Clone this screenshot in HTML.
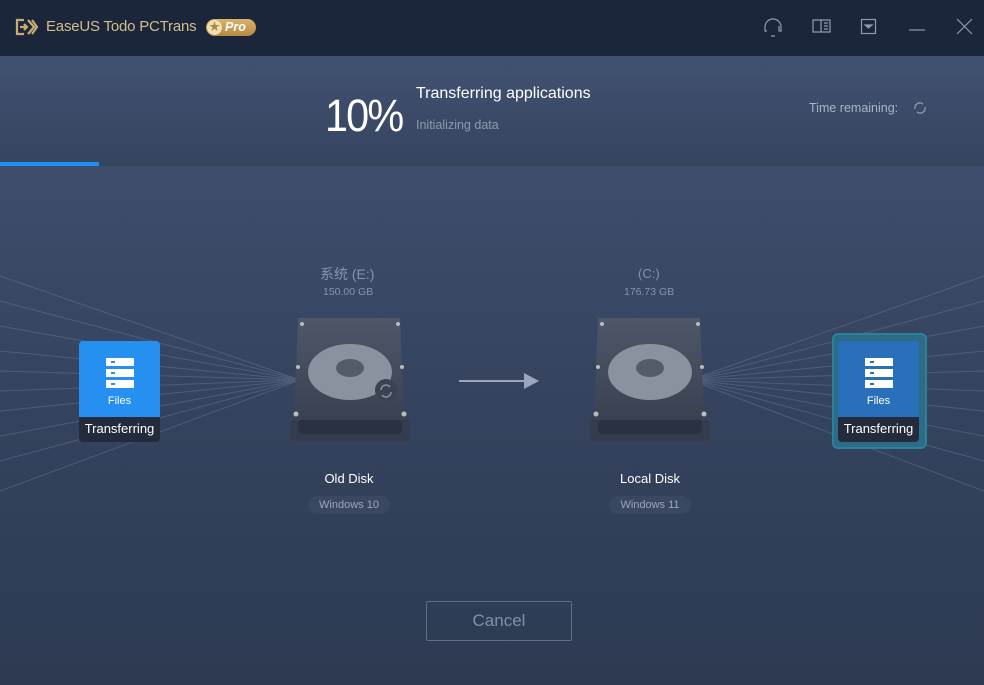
<!DOCTYPE html>
<html><head><meta charset="utf-8"><style>
*{margin:0;padding:0;box-sizing:border-box}
body{width:984px;height:685px;overflow:hidden;font-family:"Liberation Sans","Noto Sans CJK SC",sans-serif;background:#2f3c55;position:relative}
.abs{position:absolute}
#title{left:0;top:0;width:984px;height:56px;background:#1b263a}
#head{left:0;top:56px;width:984px;height:110px;background:linear-gradient(#415171,#36445f)}
#body{left:0;top:166px;width:984px;height:519px;background:linear-gradient(#3d4d6b,#34425d 50%,#2d3a52)}
.card{width:81px;height:101px;border-radius:4px;overflow:hidden}
.card .top{height:76px;display:flex;flex-direction:column;align-items:center;padding-top:17px;color:#fff;font-size:11px}
.card .bot{height:25px;background:#232b3c;color:#fff;font-size:13px;text-align:center;line-height:23px}
.lab{color:#fff;font-size:13px;text-align:center;width:120px}
.pill{font-size:11px;color:#9aa6bb;background:#3a4762;border-radius:9px;height:18px;line-height:18px;text-align:center}
</style></head><body>
<div id="title" class="abs"></div>
<div class="abs" style="left:14px;top:17px"><svg width="24" height="20" viewBox="0 0 24 20" fill="none" stroke="#c8ac74" stroke-width="2.2"><path d="M10 3H3v14h7M6 10h7M10 7l3 3-3 3M14 3l6 7-6 7M18 3l5 7-5 7"/></svg></div>
<div class="abs" style="left:46px;top:18px;color:#d2bd8e;font-size:15px;letter-spacing:-0.2px">EaseUS Todo PCTrans</div>
<div class="abs" style="left:206px;top:19px;width:50px;height:17px;border-radius:9px;background:linear-gradient(#d8b36c,#b48a40);color:#fff;font-weight:bold;font-style:italic;font-size:12.5px;line-height:17px;padding-left:19px">Pro</div>
<div class="abs" style="left:207px;top:20px;width:15px;height:15px;border-radius:50%;background:#f0dfb5;color:#b48a40;font-size:11px;text-align:center;line-height:15px">★</div>
<svg class="abs" style="left:760px;top:14px" width="220" height="28" fill="none" stroke="#8e9bb0" stroke-width="1.2">
<path d="M5 13a8 8 0 0 1 16 0v4h-2v-5M5 12v5h2M11 22h4"/>
<path d="M53 6h8v12h-8zM61 6h9v12h-9zM64 9h4M64 12h4M64 15h4"/>
<rect x="101.5" y="5.5" width="14" height="14"/><path d="M105 11h7l-3.5 3z" fill="#8e9bb0"/>
<path d="M149 16h16"/>
<path d="M197 5l15 15M212 5l-15 15"/>
</svg>
<div id="head" class="abs"></div>
<div class="abs" style="left:0;top:162px;width:99px;height:4px;background:#1f8ff0"></div>
<div class="abs" style="left:325px;top:90px;color:#fff;font-size:45px;letter-spacing:-2px;transform:scaleX(0.92);transform-origin:left">10%</div>
<div class="abs" style="left:416px;top:85px;color:#fff;font-size:16px">Transferring applications</div>
<div class="abs" style="left:416px;top:118px;color:#8e9ab0;font-size:12.5px">Initializing data</div>
<div class="abs" style="left:809px;top:101px;color:#aab4c6;font-size:12.5px">Time remaining:</div>
<svg class="abs" style="left:912px;top:100px" width="16" height="16" fill="none" stroke="#8e9bb0" stroke-width="1.3"><path d="M3 9a5 5 0 0 1 8-5M13 7a5 5 0 0 1-8 5"/></svg>
<div id="body" class="abs"></div>
<svg class="abs" style="left:0;top:166px" width="984" height="519" stroke="#8696b4" stroke-width="1" opacity="0.3">
<path d="M0 110L300 214M0 135L300 214M0 160L300 214M0 185L300 214M0 205L300 214M0 225L300 214M0 245L300 214M0 270L300 214M0 295L300 214M0 325L300 214"/>
<path d="M984 110L690 214M984 135L690 214M984 160L690 214M984 185L690 214M984 205L690 214M984 225L690 214M984 245L690 214M984 270L690 214M984 295L690 214M984 325L690 214"/>
</svg>
<div class="abs" style="left:320px;top:264px;color:#8794ab;font-size:14px">系统 (E:)</div>
<div class="abs" style="left:323px;top:286px;color:#8794ab;font-size:10.5px">150.00 GB</div>
<div class="abs" style="left:638px;top:266px;color:#8794ab;font-size:13px">(C:)</div>
<div class="abs" style="left:624px;top:286px;color:#8794ab;font-size:10.5px">176.73 GB</div>
<svg class="abs" style="left:288px;top:316px" width="124" height="126">
<defs><linearGradient id="dg" x1="0" y1="0" x2="0" y2="1"><stop offset="0" stop-color="#4e5768"/><stop offset="1" stop-color="#3a4252"/></linearGradient></defs>
<path d="M10 2h102l4 102H6z" fill="url(#dg)"/><rect x="2" y="104" width="120" height="21" rx="3" fill="#343c4d"/><rect x="10" y="104" width="104" height="14" rx="4" fill="#2a3140"/>
<ellipse cx="62" cy="56" rx="42" ry="28" fill="#8a929f"/><ellipse cx="62" cy="52" rx="14" ry="9" fill="#545c6b"/>
<circle cx="98" cy="74" r="11" fill="#3b4352"/><path d="M93 74a5 5 0 0 1 9-3M103 76a5 5 0 0 1-9 3" stroke="#8a929f" fill="none" stroke-width="1.5"/>
<g fill="#bbb"><circle cx="14" cy="8" r="2"/><circle cx="110" cy="8" r="2"/><circle cx="10" cy="51" r="2"/><circle cx="114" cy="51" r="2"/><circle cx="8" cy="98" r="2.5"/><circle cx="116" cy="98" r="2.5"/></g></svg>
<svg class="abs" style="left:588px;top:316px" width="124" height="126">
<path d="M10 2h102l4 102H6z" fill="url(#dg)"/><rect x="2" y="104" width="120" height="21" rx="3" fill="#343c4d"/><rect x="10" y="104" width="104" height="14" rx="4" fill="#2a3140"/>
<ellipse cx="62" cy="56" rx="42" ry="28" fill="#8a929f"/><ellipse cx="62" cy="52" rx="14" ry="9" fill="#545c6b"/>
<g fill="#bbb"><circle cx="14" cy="8" r="2"/><circle cx="110" cy="8" r="2"/><circle cx="10" cy="51" r="2"/><circle cx="114" cy="51" r="2"/><circle cx="8" cy="98" r="2.5"/><circle cx="116" cy="98" r="2.5"/></g></svg>
<svg class="abs" style="left:458px;top:372px" width="84" height="18"><path d="M1 9h66" stroke="#9aa6bd" stroke-width="2"/><path d="M66 1l15 8-15 8z" fill="#9aa6bd"/></svg>
<div class="abs lab" style="left:289px;top:471px">Old Disk</div>
<div class="abs pill" style="left:308px;top:496px;width:82px">Windows 10</div>
<div class="abs lab" style="left:590px;top:471px">Local Disk</div>
<div class="abs pill" style="left:609px;top:496px;width:82px">Windows 11</div>
<div class="abs card" style="left:79px;top:341px"><div class="top" style="background:#2590f0"><svg width="28" height="30" fill="#fff"><rect y="0" width="28" height="8"/><rect y="11" width="28" height="8"/><rect y="22" width="28" height="8"/><g fill="#2590f0"><rect x="5" y="3" width="4" height="2"/><rect x="5" y="14" width="4" height="2"/><rect x="5" y="25" width="4" height="2"/></g></svg><div style="margin-top:7px">Files</div></div><div class="bot">Transferring</div></div>
<div class="abs" style="left:832px;top:333px;width:95px;height:116px;border-radius:6px;background:#2d6c86;border:2px solid #2e7f99"></div>
<div class="abs card" style="left:838px;top:341px"><div class="top" style="background:#2a6fb9"><svg width="28" height="30" fill="#fff"><rect y="0" width="28" height="8"/><rect y="11" width="28" height="8"/><rect y="22" width="28" height="8"/><g fill="#2a6fb9"><rect x="5" y="3" width="4" height="2"/><rect x="5" y="14" width="4" height="2"/><rect x="5" y="25" width="4" height="2"/></g></svg><div style="margin-top:7px">Files</div></div><div class="bot">Transferring</div></div>
<div class="abs" style="left:426px;top:601px;width:146px;height:40px;border:1px solid #5d6d8a;border-radius:2px;color:#7f90ad;font-size:17px;text-align:center;line-height:38px">Cancel</div>
</body></html>
